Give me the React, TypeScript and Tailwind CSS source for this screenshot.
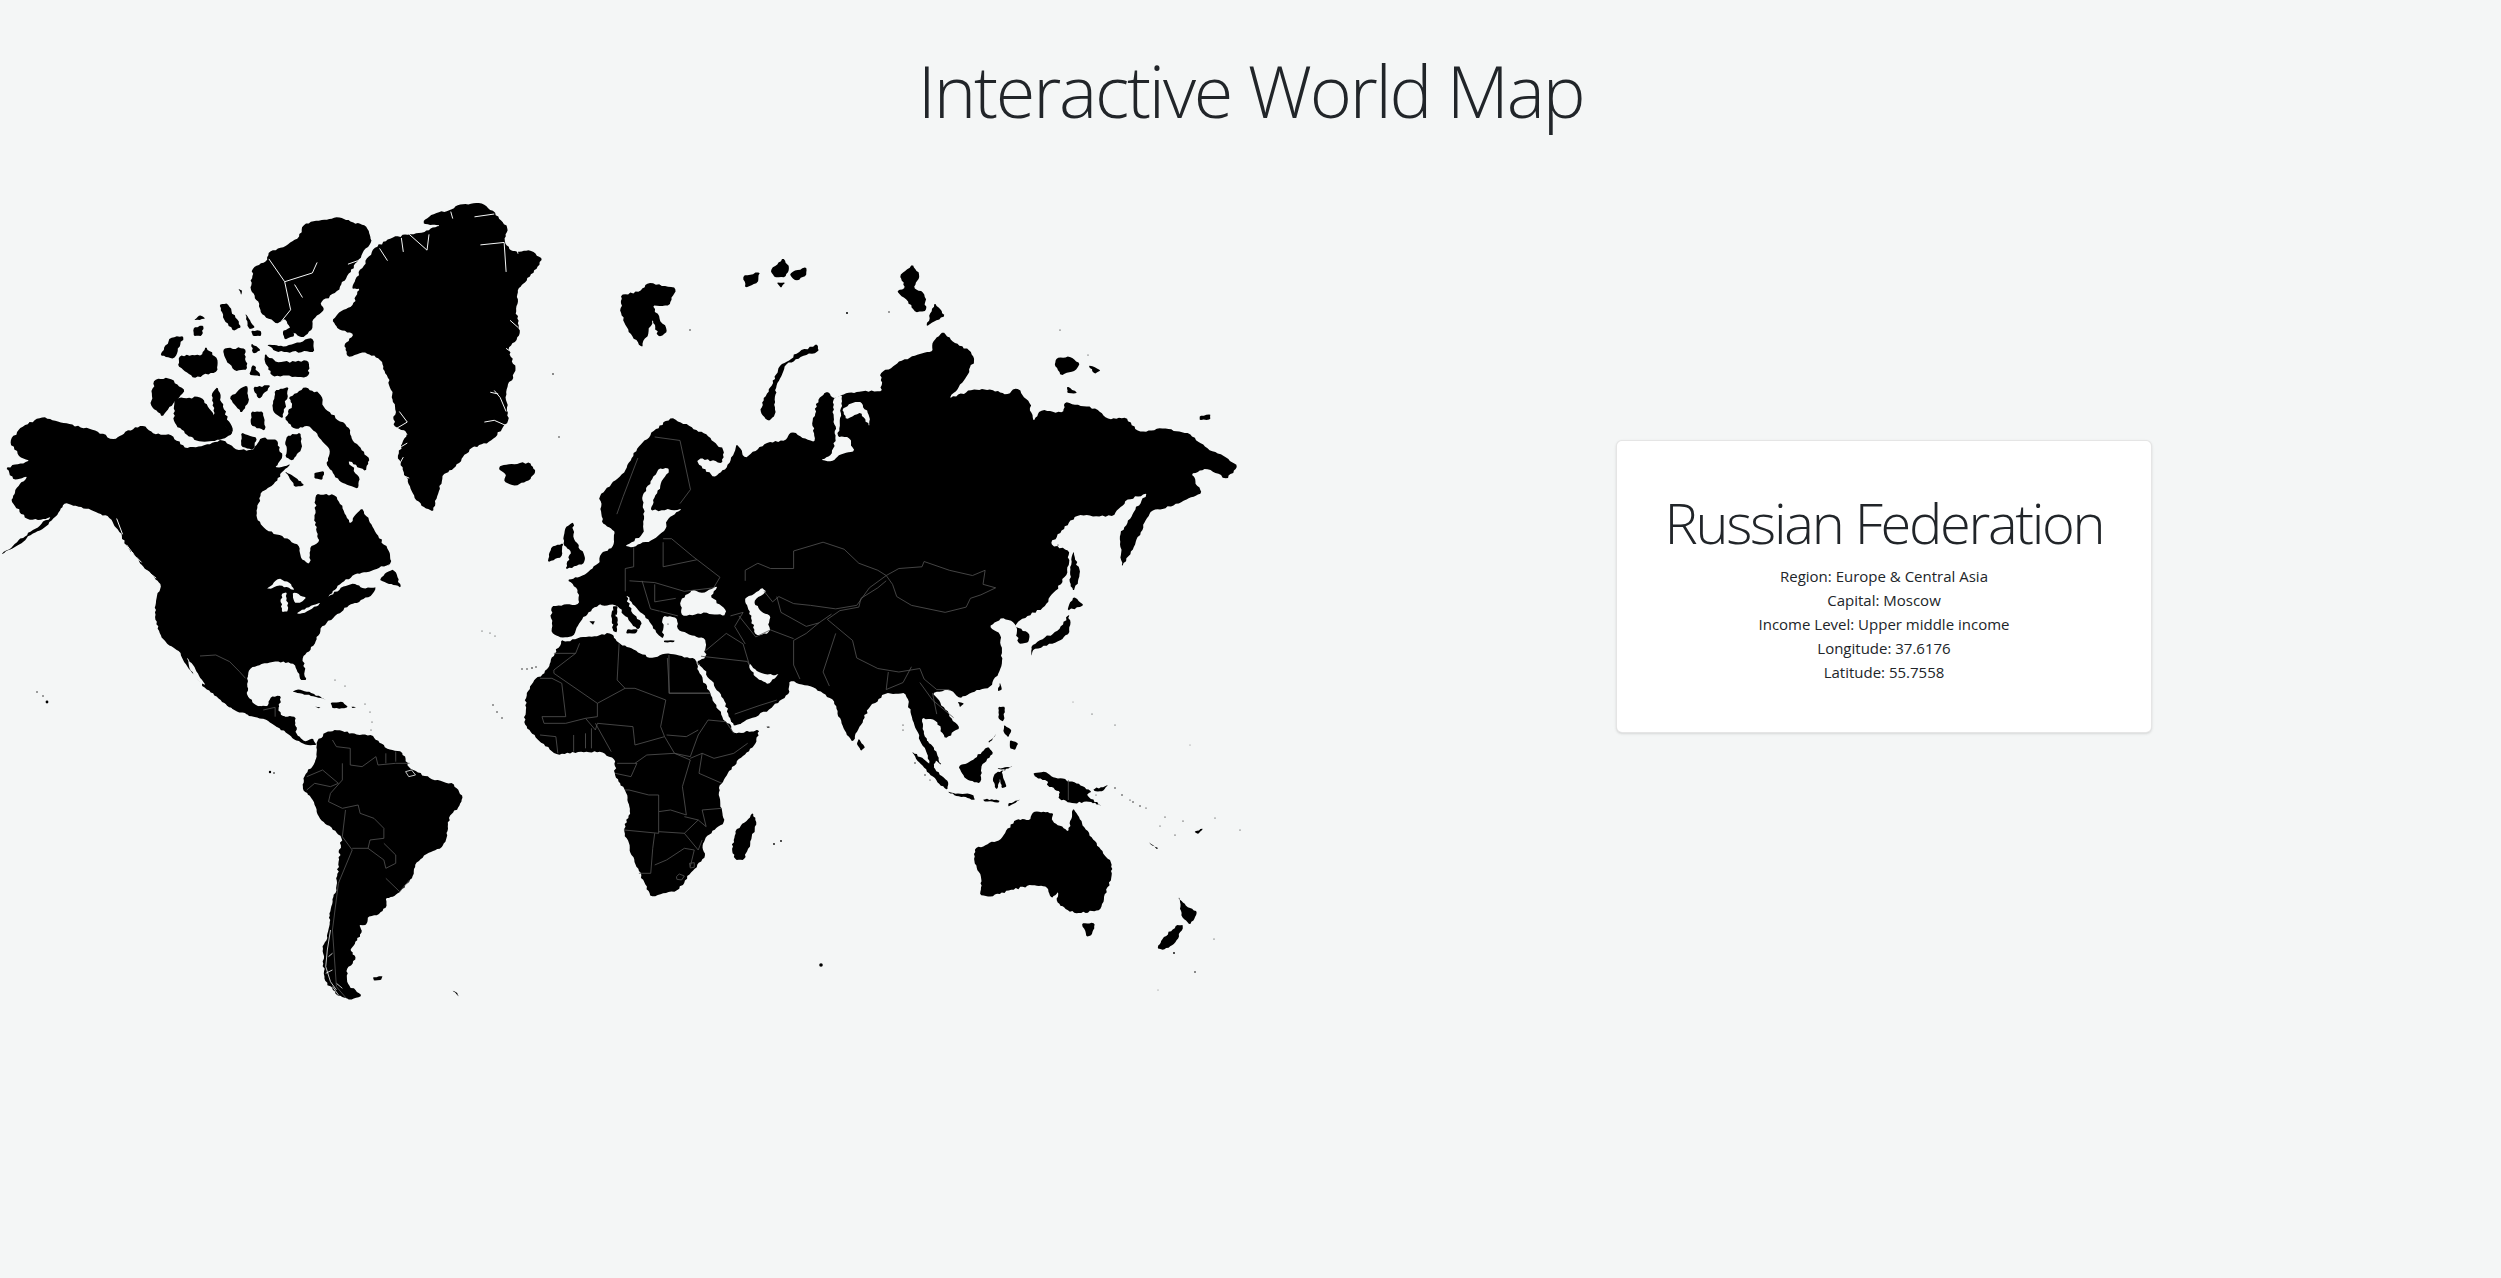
const LAND_NA = [
  "2,1068 40,1045 80,1010 120,985 150,945 165,920 195,930 240,945 280,965 300,1000 325,1050 345,1075 360,1100 385,1125 408,1155 395,1195 392,1250 405,1295 425,1325 455,1345 475,1390 520,1450 555,1480 590,1510 640,1530 680,1540 720,1570 745,1568 748,1530 712,1528 688,1470 698,1490 680,1500 650,1500 625,1470 622,1420 635,1390 665,1378 700,1372 745,1380 760,1425 775,1425 765,1360 795,1325 812,1275 850,1240 885,1210 905,1205 945,1178 960,1120 990,1090 985,1060 950,1005 915,935 885,980 868,940 850,900 800,895 795,960 800,1000 808,1030 785,1045 782,1095 762,1080 755,1040 670,995 648,960 660,890 690,870 720,825 735,810 695,820 715,790 700,740 660,735 640,770 600,770 560,740 520,755 470,765 430,725 390,725 365,700 320,715 290,740 230,710 150,690 110,675 60,700 25,745 50,790 75,800 15,820 35,855 70,845 40,880 28,915 65,965 100,970 130,960 80,1000 40,1035",
  // Greenland
  "1072,115 1100,95 1140,85 1160,70 1215,65 1250,90 1285,140 1275,170 1290,200 1310,205 1340,200 1372,225 1330,290 1310,310 1305,370 1315,440 1285,480 1305,540 1280,600 1285,690 1240,745 1190,765 1150,820 1120,840 1105,905 1095,945 1075,935 1050,910 1020,830 1005,790 1030,720 995,700 1000,650 980,560 960,510 920,490 880,505 870,470 895,440 855,425 840,400 860,375 890,360 910,310 890,310 900,280 945,195 990,165 1035,155 1070,150 1110,130 1072,125",
  // Ellesmere
  "935,155 925,130 890,120 855,105 810,115 770,125 755,165 720,190 680,205 675,230 640,250 633,310 655,350 660,380 700,410 720,395 735,430 765,450 790,425 790,400 820,370 810,350 850,320 880,270 905,230 940,175",
  "715,430 735,420 745,445 720,455",
  "690,470 720,475 790,450 795,490 700,490 675,470",
  "670,495 700,520 780,515 780,560 690,560 670,520",
  "555,355 575,352 610,420 590,430 565,395",
  "620,380 645,420 630,425",
  "635,430 660,430 660,445 640,445",
  "505,385 520,395 490,400",
  "490,420 515,415 510,445 490,445",
  "430,450 465,445 440,510 405,500",
  "455,500 510,500 520,475 550,510 550,545 490,565 450,530",
  "565,480 620,480 625,540 595,545 570,510",
  "635,465 660,485 640,495",
  "640,525 660,560 630,555",
  "603,310 612,315 610,328",
  // Baffin
  "730,620 770,590 810,610 820,650 885,710 890,740 935,795 925,830 880,800 910,850 905,880 880,870 860,860 825,810 835,770 800,720 780,700 745,710 720,680 740,640",
  // Victoria, Banks and the smaller arctic islands
  "440,620 510,620 535,660 590,720 560,740 500,745 470,725 440,690",
  "390,570 430,565 468,600 410,675 380,640",
  "535,610 550,590 565,650 590,720 545,690",
  "580,620 625,585 630,630 610,665",
  "640,590 685,585 655,625",
  "635,660 665,660 670,715 635,700",
  "695,600 730,590 715,680 690,660",
  "610,720 650,735 640,770 610,760",
  "725,730 760,720 762,770 740,800 722,790",
  "795,835 820,830 815,855 795,850",
  "720,830 750,850 770,870 745,875",
  // Newfoundland, Iceland, Britain and Ireland
  "975,1120 995,1110 1015,1162 980,1150 960,1140",
  "1265,815 1290,810 1340,805 1355,830 1340,855 1305,872 1275,860 1280,840 1262,825",
  "1430,990 1450,975 1450,1020 1480,1075 1475,1095 1430,1110 1445,1060 1425,1040",
  "1395,1045 1425,1035 1420,1075 1385,1090",
  // France and Iberia
  "1435,1140 1470,1130 1510,1095 1568,1050 1568,1195 1530,1205 1500,1220 1470,1255 1450,1300 1420,1305 1395,1290 1395,1215 1465,1208 1460,1165",
  "1550,1215 1562,1215 1560,1240 1552,1238",
  "1550,1245 1562,1245 1560,1290 1550,1285",
  "1490,1258 1505,1258 1500,1268",
];

const WATER_NA = [
  "828,1190 862,1150 900,1122 930,1118 975,1100 985,1095 965,1125 955,1160 920,1165 895,1150 865,1160",
  "675,1165 705,1135 735,1150 745,1170 710,1155 685,1165",
  "712,1180 725,1175 728,1230 713,1232",
  "740,1175 775,1190 760,1205 745,1205",
  "750,1235 790,1212 810,1205 805,1213 760,1237",
  "472,1360 490,1385 520,1440 505,1432 480,1395",
];

// thin fjords and channels, drawn in the page colour
const FJORDS_NA = [
  "680,225 720,290 735,370 712,402",
  "720,290 790,265 802,235",
  "745,298 765,335",
  "1200,105 1250,97",
  "1215,185 1275,178 1280,262",
  "1305,185 1310,210",
  "1085,130 1110,130",
  "1140,90 1145,110",
  "1015,165 1020,205",
  "1035,155 1080,200 1085,155",
  "960,195 980,230",
  "905,230 880,240",
  "1250,600 1265,620 1280,660",
  "1240,605 1260,610",
  "1225,690 1250,685 1280,700",
  "1290,400 1310,420",
  "1280,480 1305,500",
  "1010,660 1030,690 1000,710 1030,725",
  "1015,760 1030,750",
  "1020,790 1010,810",
  "1025,845 1035,850",
  "295,965 310,1010",
  "320,1040 340,1070",
  "360,1105 395,1135",
  "345,1075 358,1090",
];

const LAND_EU = [
  // Eurasia including the Arabian peninsula
  "0,1070 0,925 30,905 35,860 25,850 5,835 0,755 50,700 90,620 130,570 170,535 215,560 260,590 295,630 290,665 240,650 230,660 270,705 300,680 325,610 345,650 400,605 440,600 455,575 510,605 505,540 520,480 540,460 555,480 575,470 620,460 670,460 665,410 720,370 770,350 790,345 790,320 815,290 840,320 880,345 890,370 870,420 830,480 885,455 930,455 965,470 990,450 1020,490 1030,545 1045,515 1100,520 1105,490 1180,510 1210,540 1250,535 1280,575 1340,565 1400,580 1440,620 1490,650 1515,672 1490,710 1440,680 1405,695 1430,750 1390,770 1340,795 1310,800 1295,830 1270,900 1240,960 1235,870 1270,800 1300,750 1250,770 1220,815 1130,815 1070,895 1115,915 1110,980 1055,1075 1000,1110 985,1130 1020,1150 1018,1175 995,1180 985,1120 955,1105 925,1130 950,1150 955,1240 930,1300 880,1320 855,1335 830,1310 790,1320 855,1420 820,1450 800,1400 765,1390 770,1440 800,1500 790,1540 740,1385 725,1320 680,1320 640,1360 615,1420 600,1460 575,1410 555,1340 510,1305 450,1285 450,1320 405,1365 320,1415 300,1385 250,1270 230,1230 250,1220 250,1165 215,1155 185,1140 182,1105 150,1100 150,1165 135,1150 120,1120 85,1075 62,1040 75,1090 100,1120 90,1140 70,1115 40,1070",
  "515,325 520,345 480,360 440,385 420,440 415,480 415,530 400,545 380,515 395,470 410,440 425,390 470,350",
  "742,98 760,130 745,165 770,180 775,230 750,235 730,200 705,175 725,165 712,130",
  "795,208 820,245 775,275",
  // Svalbard and Franz Josef Land
  "50,185 95,175 115,150 180,165 165,215 125,215 160,290 140,305 125,255 100,335 75,300 50,240",
  "340,130 380,120 375,150 345,165",
  "405,115 435,80 450,105 440,135 415,135",
  "450,125 490,105 490,130 465,145",
  "420,150 440,150 430,165",
  // New Siberian Islands, Wrangel
  "1085,365 1115,360 1140,380 1130,400 1095,415 1080,385",
  "1160,385 1190,400 1175,410",
  "1110,445 1135,465 1110,465",
  "1425,530 1450,525 1450,540 1425,542",
  // Sakhalin and Japan
  "1125,915 1140,985 1125,1030 1115,1000 1120,950",
  "1125,1045 1150,1070 1110,1085",
  "1115,1095 1115,1150 1085,1175 1030,1195 1025,1215 1025,1185 1090,1140",
  // Sri Lanka, Taiwan, Hainan, Sicily, Crete, Sardinia
  "615,1450 630,1475 620,1485 610,1465",
  "950,1290 955,1310 945,1315",
  "850,1345 865,1350 855,1360",
  "65,1138 90,1138 85,1150 62,1150",
  "152,1170 178,1170 175,1175 152,1175",
  "28,1085 38,1085 36,1125 28,1122",
];

const WATER_EU = [
  "190,1060 220,1025 245,1035 280,1015 262,1045 300,1085 295,1100 250,1090 195,1100",
  "345,1050 385,1020 395,1030 365,1060 385,1090 405,1100 400,1150 370,1155 360,1110 345,1060",
  "355,1235 375,1260 415,1270 425,1265 400,1295 375,1280 355,1250",
  "228,1230 245,1250 295,1340 315,1410 300,1405 265,1330 235,1260",
  "315,1415 400,1385 375,1425 320,1435",
  "60,900 100,870 105,820 100,760 140,680 165,680 130,760 120,800 195,795 160,825 155,855 130,880 75,905",
  "555,480 575,470 570,540 565,590 590,590 605,630 570,640 550,660 525,655 550,640 560,590 555,530",
  "620,490 640,530 640,560 620,520 585,540 575,510 605,490",
];

const LAND_AM_AF = [
  // Central America
  "0,165 50,230 70,260 130,285 150,285 180,310 220,340 240,360 270,375 295,375 285,355 265,365 245,345 240,300 195,285 205,228 180,230 170,260 135,260 118,230 120,150 0,100",
  // South America
  "295,365 320,335 350,330 400,345 435,345 470,385 510,395 530,445 590,480 640,490 665,530 655,560 630,590 625,650 610,685 575,700 545,730 540,765 510,810 490,830 470,835 472,860 450,885 425,890 420,915 403,915 410,935 390,975 380,990 395,1015 370,1050 375,1095 410,1127 380,1140 345,1125 315,1080 310,990 325,930 330,870 345,800 350,730 358,650 330,620 305,600 280,530 260,510 265,465 290,430 295,400",
  // Africa
  "885,130 915,60 925,65 980,50 1040,40 1060,70 1100,90 1140,115 1180,100 1250,115 1265,140 1300,220 1340,310 1350,340 1415,330 1400,380 1360,420 1330,470 1312,500 1320,570 1325,610 1280,650 1270,680 1278,710 1240,760 1210,810 1140,830 1125,790 1100,730 1072,630 1088,570 1075,510 1050,470 1050,420 1015,395 960,395 905,405 855,360 820,310 825,230 840,190 880,145",
  "1398,578 1408,610 1385,690 1375,720 1355,720 1345,690 1355,630 1385,600",
  // Caribbean
  "233,215 250,208 285,220 320,240 290,230 255,220",
  "330,248 360,245 375,262 335,265",
  "290,260 305,262 300,265",
  "383,260 395,262 385,264",
  // Falklands, South Georgia, Socotra
  "437,1072 462,1068 458,1080 440,1082",
  "638,1112 650,1118 655,1130",
  "1432,320 1443,321 1436,324",
];

const FJORDS_AM = [
  "330,930 322,990 318,1040 330,1085 345,1110",
  "345,1090 360,1105",
  "325,1010 335,1000",
  "318,1060 335,1050",
  "335,1100 350,1125",
  "520,455 535,450 545,465 528,470 520,455",
];

const LAND_OC = [
  // Australia and Tasmania
  "345,595 420,570 465,510 510,510 520,485 580,490 575,510 625,545 640,475 675,535 720,595 755,640 755,680 720,780 660,790 620,780 590,755 595,725 575,745 560,710 520,705 450,720 395,740 360,735 365,690 342,630",
  "665,820 705,820 695,855 680,860",
  // Maritime South East Asia
  "155,305 195,330 265,395 262,420 235,400 190,350",
  "190,265 220,290 245,345 225,330 195,295",
  "385,290 400,310 365,345 360,400 315,385 295,350 330,335",
  "410,355 460,348 425,365 430,385 440,410 425,415 420,385 410,420 398,390 405,370 440,360",
  "262,425 340,435 345,450 300,440",
  "370,448 420,452 415,458 372,454",
  "445,460 482,448 445,470",
  "520,370 555,365 590,385 640,395 695,425 680,435 725,468 690,455 640,460 595,445 600,425 560,405 565,395 525,380",
  "415,170 435,170 430,215 415,205",
  "450,270 475,280 465,300 450,295",
  "432,225 455,240 445,262 430,245",
  "385,275 410,250 388,278",
  "700,418 745,405 728,424 705,424",
  // New Caledonia, Fiji, New Zealand
  "865,575 895,595 890,597",
  "1003,545 1030,535 1015,552",
  "955,740 980,770 1012,785 990,825 965,800",
  "950,825 970,825 945,880 910,900 892,895 905,870",
];

const BORDERS_EU = [
  "680,985 710,965 765,960 770,945 830,970 885,985 915,970 910,1010 940,1020 905,1040 880,1050 870,1075 820,1090 740,1070 705,1045 695,1010 680,985",
  "345,1000 345,970 375,950 405,965 460,965 460,915 530,890 580,910 615,950 660,970 680,985 640,1020 610,1070 560,1080 500,1070 460,1065 425,1045 410,1060 390,1030",
  "680,1000 660,1020 620,1050 615,1075 570,1085 540,1110 560,1130 600,1170 610,1220 660,1250 710,1260 760,1250 770,1280 800,1310 830,1310",
  "520,1120 490,1150 460,1170 460,1240 475,1280",
  "560,1150 530,1260 545,1300",
  "330,1100 370,1160 405,1140 460,1165",
  "340,1180 355,1240",
  "420,1045 430,1090 490,1130 520,1120 550,1095",
  "80,905 80,960 60,965 60,1030",
  "150,880 170,880 220,930 285,990 270,1020 200,1030 130,1005 70,1000",
  "100,1000 120,1080 185,1100",
  "130,1010 130,1060 180,1050",
  "150,890 150,960 230,940",
  "90,650 55,760 40,810",
  "130,590 190,600 215,740 190,780",
  "160,1220 165,1320 260,1320",
  "240,1215 350,1230 355,1240",
  "320,1380 380,1355 420,1340",
  "250,1200 300,1150 340,1180",
  "685,1260 680,1310 720,1290 740,1245",
  "760,1290 790,1340 840,1390",
  "790,1320 800,1380",
  "310,1100 340,1090 320,1130 345,1180",
];

const BORDERS_AM_AF = [
  "1186,105 1186,220 1290,220",
  "1060,70 1055,180 1075,205 1100,205 1178,240",
  "960,70 950,100 895,150 895,160 1005,250 1075,205",
  "860,175 890,175 915,190 925,290 865,290 870,310 925,310 975,295 1005,290 1005,250",
  "1178,240 1165,320 1175,350 1100,375 1095,320 1005,310 1000,330 975,295",
  "1175,350 1200,400 1240,410 1260,345 1285,300 1330,305 1350,340",
  "1180,345 1230,350 1260,330",
  "1240,415 1270,400 1300,415 1350,400 1385,370",
  "1270,400 1262,460 1320,490",
  "1100,430 1130,405 1200,400 1240,420 1220,500 1230,585 1190,570 1160,575 1160,525 1135,525 1085,510 1075,510",
  "1160,575 1160,640 1072,630",
  "1160,635 1225,640 1260,600 1225,590",
  "1150,640 1145,685 1140,760 1110,760",
  "1150,735 1180,720 1225,685 1250,690 1240,740",
  "1260,600 1280,620 1270,570 1320,565",
  "1225,640 1260,690 1270,660",
  "860,345 900,350 905,400",
  "945,345 945,395",
  "975,340 975,385",
  "990,325 990,385",
  "1000,310 1040,395",
  "895,100 950,100",
  "1055,430 1105,430 1090,470 1050,460",
  "1205,770 1212,762 1225,768 1218,780 1206,778 1205,770",
  "1238,730 1250,728 1250,742 1240,744 1238,730",
  // South America
  "335,360 345,380 380,385 380,435 410,440 445,410 450,435 495,430 530,430",
  "470,400 470,430",
  "495,395 495,425",
  "360,430 360,480 330,520 325,545 360,565 400,555 405,580 440,595 465,625 465,655 430,660 425,685 465,720 470,745 495,730 495,705 465,670",
  "270,470 310,450 350,490 330,500 290,490 270,510",
  "368,570 360,650 385,690 350,790 335,930 345,1100 370,1135",
  "385,685 425,685",
  "470,775 505,815 530,780",
  // Mexico and the United States
  "0,108 40,105 75,125 100,155 115,175",
  "160,270 190,262 190,290",
];

const SPECKS: [number, number, number][] = [
  // Hawaii
  [37, 692, 0.7], [43, 696, 0.7], [47, 702, 1.4],
  // Galapagos
  [270, 772, 1.2], [274, 773, 0.8],
  // Canaries, Cape Verde, Azores
  [522, 669, 0.7], [527, 669, 0.7], [532, 668, 0.8], [536, 667, 0.7],
  [497, 712, 0.7], [502, 718, 0.7], [493, 705, 0.7],
  [482, 631, 0.5], [490, 633, 0.5], [495, 636, 0.5],
  // Lesser Antilles
  [365, 704, 0.5], [370, 712, 0.5], [372, 722, 0.5], [371, 730, 0.5], [345, 686, 0.5], [335, 680, 0.5],
  // Mauritius, Reunion, Kerguelen
  [781, 841, 0.9], [774, 844, 0.9], [821, 965, 1.8],
  // Faroes, Jan Mayen
  [559, 437, 0.7], [553, 374, 0.8],
  // Mediterranean and Aegean
  [660, 612, 0.7], [665, 606, 0.7], [668, 615, 0.7], [661, 622, 0.7], [672, 610, 0.6], [668, 624, 0.6],
  // Andaman, Mentawai
  [903, 725, 0.6], [903, 730, 0.6], [915, 763, 0.7], [925, 775, 0.7], [930, 780, 0.6],
  // Pacific atolls
  [1058, 545, 0.6], [1183, 821, 0.6], [1175, 835, 0.6], [1115, 725, 0.5], [1190, 745, 0.4], [1240, 830, 0.5], [1215, 818, 0.5],
  [1165, 817, 0.6], [1146, 808, 0.6], [1130, 800, 0.6], [1096, 795, 0.5], [1160, 826, 0.5],
  [1092, 714, 0.5], [1073, 702, 0.4], [1195, 972, 0.8], [1174, 953, 0.9], [1158, 990, 0.4], [1214, 939, 0.5],
  [1115, 788, 0.7], [1122, 795, 0.7], [1133, 802, 0.7], [1140, 806, 0.7],
  // Siberia offshore
  [1060, 330, 0.6], [1093, 370, 0.5], [1088, 355, 0.5], [847, 313, 1], [889, 312, 0.7], [690, 330, 0.7],
];

// rounds the corners a little and breaks long edges into an uneven coast
function roughen(points: string) {
  const pts = points.split(" ").map((p) => p.split(",").map(Number));
  let seed = Math.round(pts[0][0] * 31 + pts[0][1] * 17) + 7;
  const rand = () => {
    seed = (seed * 16807) % 2147483647;
    return (seed % 1000) / 500 - 1;
  };
  const out: string[] = [];
  pts.forEach(([x1, y1], i) => {
    const [x2, y2] = pts[(i + 1) % pts.length];
    const len = Math.hypot(x2 - x1, y2 - y1);
    const steps = Math.max(2, Math.round(len / 8));
    const amp = Math.min(3, len * 0.06);
    const cut = Math.min(0.12, 4 / len);
    for (let s = 0; s <= steps; s++) {
      const t = cut + ((1 - 2 * cut) * s) / steps;
      const n = s === 0 || s === steps ? 0 : rand() * amp;
      const x = x1 + (x2 - x1) * t - ((y2 - y1) / len) * n;
      const y = y1 + (y2 - y1) * t + ((x2 - x1) / len) * n;
      out.push(`${x.toFixed(1)},${y.toFixed(1)}`);
    }
  });
  return out.join(" ");
}

function Polys({ points, className }: { points: string[]; className: string }) {
  return (
    <>
      {points.map((p) => (
        <polygon key={p} points={roughen(p)} className={className} />
      ))}
    </>
  );
}

function Lines({ points, stroke, width }: { points: string[]; stroke: string; width: number }) {
  return (
    <>
      {points.map((p) => (
        <polyline key={p} points={p} fill="none" stroke={stroke} strokeWidth={width} vectorEffect="non-scaling-stroke" />
      ))}
    </>
  );
}

function WorldMap() {
  return (
    <svg viewBox="0 190 1250 840" className="block h-[840px] w-[1250px] shrink-0">
      <g transform="translate(0 180) scale(0.3954 0.3508)">
        <Polys points={LAND_NA} className="fill-black" />
        <Polys points={WATER_NA} className="fill-[#f4f6f6]" />
        <Lines points={FJORDS_NA} stroke="#f4f6f6" width={1} />
      </g>
      <g transform="translate(200 620) scale(0.3954 0.3333)">
        <Polys points={LAND_AM_AF} className="fill-black" />
        <Lines points={FJORDS_AM} stroke="#f4f6f6" width={0.8} />
      </g>
      <g transform="translate(600 230) scale(0.4209 0.3508)">
        <Polys points={LAND_EU} className="fill-black" />
        <Polys points={WATER_EU} className="fill-[#f4f6f6]" />
        <Lines points={BORDERS_EU} stroke="#555555" width={0.8} />
      </g>
      <g transform="translate(200 620) scale(0.3954 0.3333)">
        <Lines points={BORDERS_AM_AF} stroke="#555555" width={0.8} />
      </g>
      <g transform="translate(860 650) scale(0.3333)">
        <Polys points={LAND_OC} className="fill-black" />
        <Lines points={["625,390 625,450"]} stroke="#555555" width={0.8} />
      </g>
      {SPECKS.map(([x, y, r]) => (
        <circle key={`${x}-${y}`} cx={x} cy={y} r={r} className="fill-black" />
      ))}
    </svg>
  );
}

export default function App() {
  const details = [
    "Region: Europe & Central Asia",
    "Capital: Moscow",
    "Income Level: Upper middle income",
    "Longitude: 37.6176",
    "Latitude: 55.7558",
  ];

  return (
    <div className="min-h-screen overflow-hidden bg-[#f4f6f6] font-['Open_Sans',sans-serif] text-[#212529]">
      <h1 className="h-[190px] pt-[47px] text-center text-[72px] leading-[1.2] font-light tracking-[-2.2px]">
        Interactive World Map
      </h1>
      <div className="flex items-start">
        <WorldMap />
        <div className="mt-[250px] ml-[366px] flex h-[293px] w-[536px] flex-col items-center rounded-md border border-black/10 bg-white pt-[48px] shadow-sm">
          <h2 className="text-[56px] leading-[1.2] font-light tracking-[-2.3px]">Russian Federation</h2>
          <div className="mt-2 text-center text-[15px] leading-6">
            {details.map((line) => (
              <p key={line}>{line}</p>
            ))}
          </div>
        </div>
      </div>
    </div>
  );
}
